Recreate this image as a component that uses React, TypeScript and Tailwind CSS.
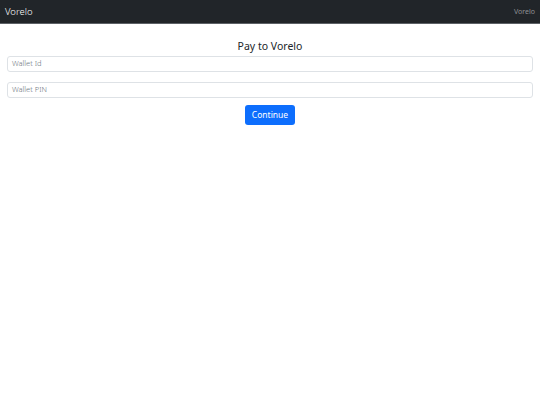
export default function App() {
  return (
    <div className="min-h-[405px] w-full bg-white" style={{ fontFamily: '"Noto Sans", sans-serif' }}>
      <nav className="flex h-[24px] items-center justify-between border-b border-[#5c6166] bg-[#212529] pl-[5px] pr-[5px]">
        <span className="text-[9.5px] font-light leading-none text-white">Vorelo</span>
        <span className="text-[7px] leading-none text-[#8f9194]">Vorelo</span>
      </nav>
      <div className="flex flex-col px-[7px] pt-[15px]">
        <h1 className="mb-[2px] text-center text-[10.5px] leading-[15px] text-[#212529]">Pay to Vorelo</h1>
        <div className="flex h-[16px] items-center rounded-[3px] border border-[#dee2e6] px-[4px] text-[7.5px] font-light text-[#6c757d]">
          Wallet Id
        </div>
        <div className="mt-[10px] flex h-[16px] items-center rounded-[3px] border border-[#dee2e6] px-[4px] text-[7.5px] font-light text-[#6c757d]">
          Wallet PIN
        </div>
        <div className="mt-[7px] flex justify-center">
          <button className="flex h-[20px] w-[50px] items-center justify-center rounded-[3px] bg-[#0d6efd] text-[8.5px] text-white">
            Continue
          </button>
        </div>
      </div>
    </div>
  );
}
